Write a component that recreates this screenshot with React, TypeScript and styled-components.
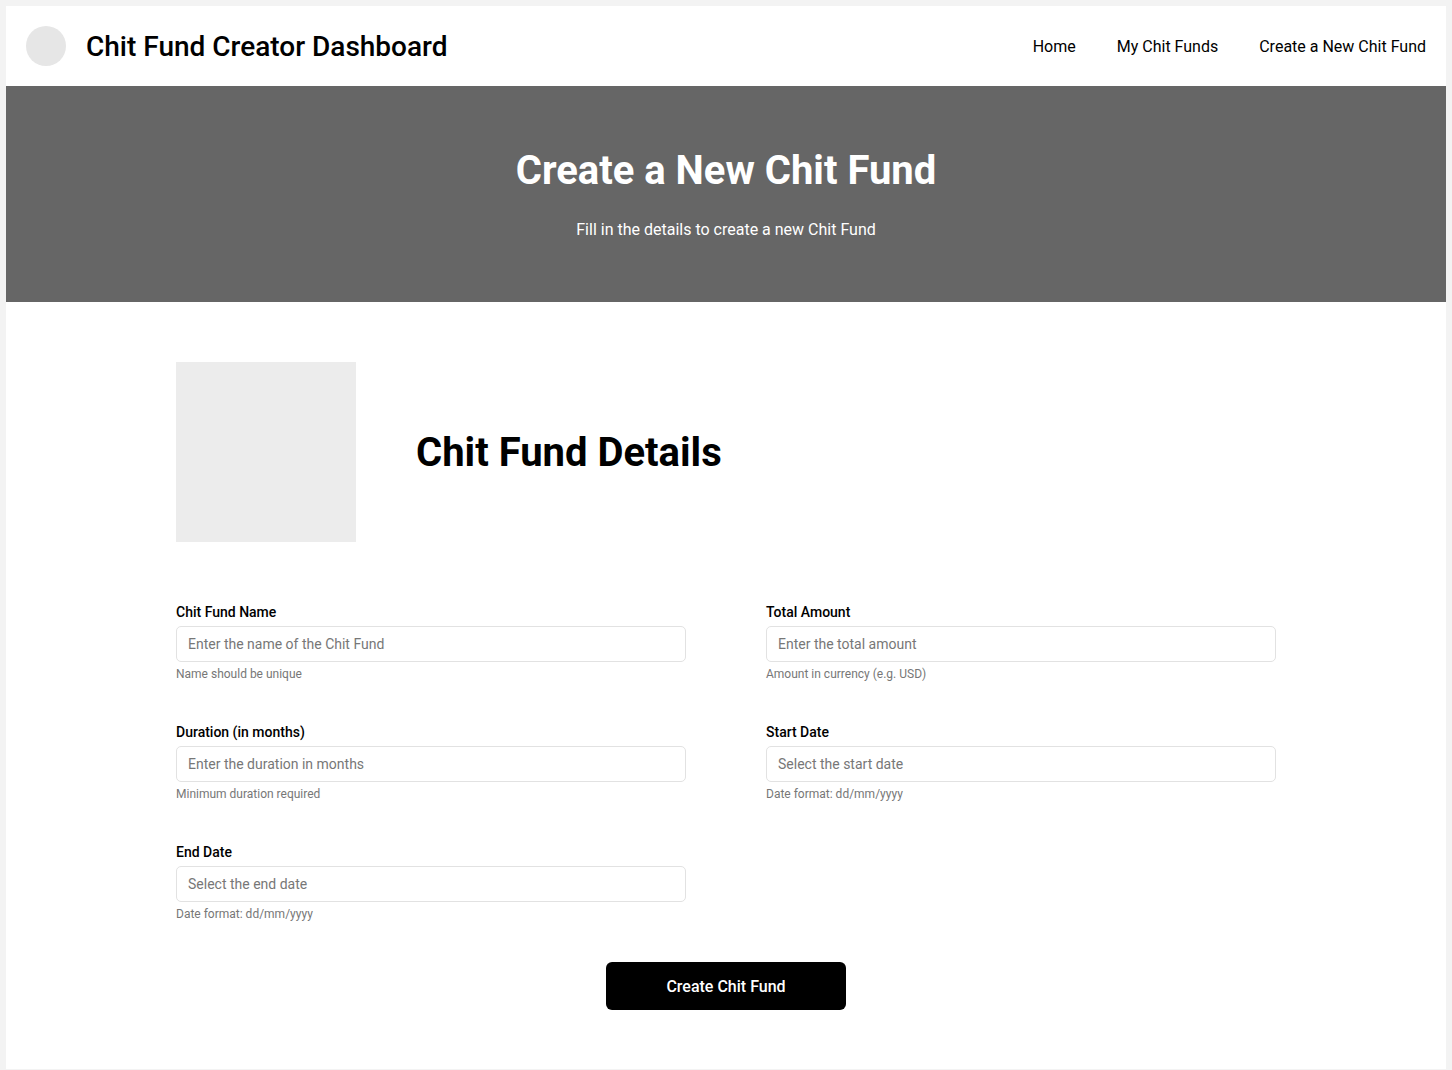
import React from 'react';
import styled, { createGlobalStyle } from 'styled-components';

interface Field {
  label: string;
  placeholder: string;
  hint: string;
}

const fields: Field[] = [
  { label: 'Chit Fund Name', placeholder: 'Enter the name of the Chit Fund', hint: 'Name should be unique' },
  { label: 'Total Amount', placeholder: 'Enter the total amount', hint: 'Amount in currency (e.g. USD)' },
  { label: 'Duration (in months)', placeholder: 'Enter the duration in months', hint: 'Minimum duration required' },
  { label: 'Start Date', placeholder: 'Select the start date', hint: 'Date format: dd/mm/yyyy' },
  { label: 'End Date', placeholder: 'Select the end date', hint: 'Date format: dd/mm/yyyy' },
];

const navLinks = ['Home', 'My Chit Funds', 'Create a New Chit Fund'];

const GlobalStyle = createGlobalStyle`
  html, body {
    margin: 0;
    padding: 0;
    background: #f3f3f3;
    font-family: Roboto, "Liberation Sans", Arial, sans-serif;
  }
  * {
    box-sizing: border-box;
  }
`;

const Page = styled.div`
  padding: 6px 6px 0;
`;

const Card = styled.div`
  background: #ffffff;
  min-height: 1063px;
  display: flex;
  flex-direction: column;
`;

const Header = styled.header`
  height: 80px;
  display: flex;
  align-items: center;
  justify-content: space-between;
  padding: 0 20px;
`;

const Brand = styled.div`
  display: flex;
  align-items: center;
  gap: 20px;
`;

const Logo = styled.div`
  width: 40px;
  height: 40px;
  border-radius: 50%;
  background: #e6e6e6;
`;

const BrandTitle = styled.h1`
  margin: 0;
  font-size: 28px;
  line-height: 34px;
  font-weight: 500;
  color: #000;
  transform: translateY(1px);
`;

const Nav = styled.nav`
  display: flex;
  gap: 41px;
`;

const NavLink = styled.a`
  font-size: 16px;
  color: #000;
  text-decoration: none;
`;

const Hero = styled.section`
  height: 216px;
  background: #666666;
  display: flex;
  flex-direction: column;
  align-items: center;
  padding-top: 62px;
`;

const HeroTitle = styled.h2`
  margin: 0;
  font-size: 40px;
  line-height: 46px;
  font-weight: 700;
  color: #fff;
`;

const HeroText = styled.p`
  margin: 26px 0 0;
  font-size: 16px;
  color: #fff;
`;

const Main = styled.main`
  width: 1100px;
  margin: 0 auto;
  padding: 60px 0 59px;
`;

const DetailsHead = styled.div`
  display: flex;
  align-items: center;
  gap: 60px;
`;

const Placeholder = styled.div`
  width: 180px;
  height: 180px;
  background: #ececec;
`;

const DetailsTitle = styled.h3`
  margin: 0;
  font-size: 40px;
  font-weight: 700;
  color: #000;
`;

const Form = styled.form`
  margin-top: 60px;
  display: flex;
  flex-direction: column;
  align-items: center;
`;

const Grid = styled.div`
  width: 100%;
  display: grid;
  grid-template-columns: 510px 510px;
  column-gap: 80px;
  row-gap: 40px;
`;

const FieldBox = styled.div`
  display: flex;
  flex-direction: column;
`;

const Label = styled.label`
  font-size: 14px;
  line-height: 20px;
  font-weight: 500;
  color: #000;
`;

const Input = styled.input`
  margin-top: 4px;
  height: 36px;
  padding: 0 11px;
  border: 1px solid #e2e2e2;
  border-radius: 5px;
  font-family: inherit;
  font-size: 14px;
  color: #000;
  outline: none;
  &::placeholder {
    color: #777;
  }
`;

const Hint = styled.span`
  margin-top: 4px;
  font-size: 12px;
  line-height: 16px;
  color: #777;
`;

const Submit = styled.button`
  margin-top: 40px;
  width: 240px;
  height: 48px;
  border: none;
  border-radius: 6px;
  background: #000;
  color: #fff;
  font-family: inherit;
  font-size: 16px;
  font-weight: 500;
  cursor: pointer;
`;

const App: React.FC = () => {
  return (
    <Page>
      <GlobalStyle />
      <Card>
        <Header>
          <Brand>
            <Logo />
            <BrandTitle>Chit Fund Creator Dashboard</BrandTitle>
          </Brand>
          <Nav>
            {navLinks.map((link) => (
              <NavLink key={link} href="#">
                {link}
              </NavLink>
            ))}
          </Nav>
        </Header>

        <Hero>
          <HeroTitle>Create a New Chit Fund</HeroTitle>
          <HeroText>Fill in the details to create a new Chit Fund</HeroText>
        </Hero>

        <Main>
          <DetailsHead>
            <Placeholder />
            <DetailsTitle>Chit Fund Details</DetailsTitle>
          </DetailsHead>

          <Form onSubmit={(e) => e.preventDefault()}>
            <Grid>
              {fields.map((f) => (
                <FieldBox key={f.label}>
                  <Label>{f.label}</Label>
                  <Input type="text" placeholder={f.placeholder} />
                  <Hint>{f.hint}</Hint>
                </FieldBox>
              ))}
            </Grid>
            <Submit type="submit">Create Chit Fund</Submit>
          </Form>
        </Main>
      </Card>
    </Page>
  );
};

export default App;
